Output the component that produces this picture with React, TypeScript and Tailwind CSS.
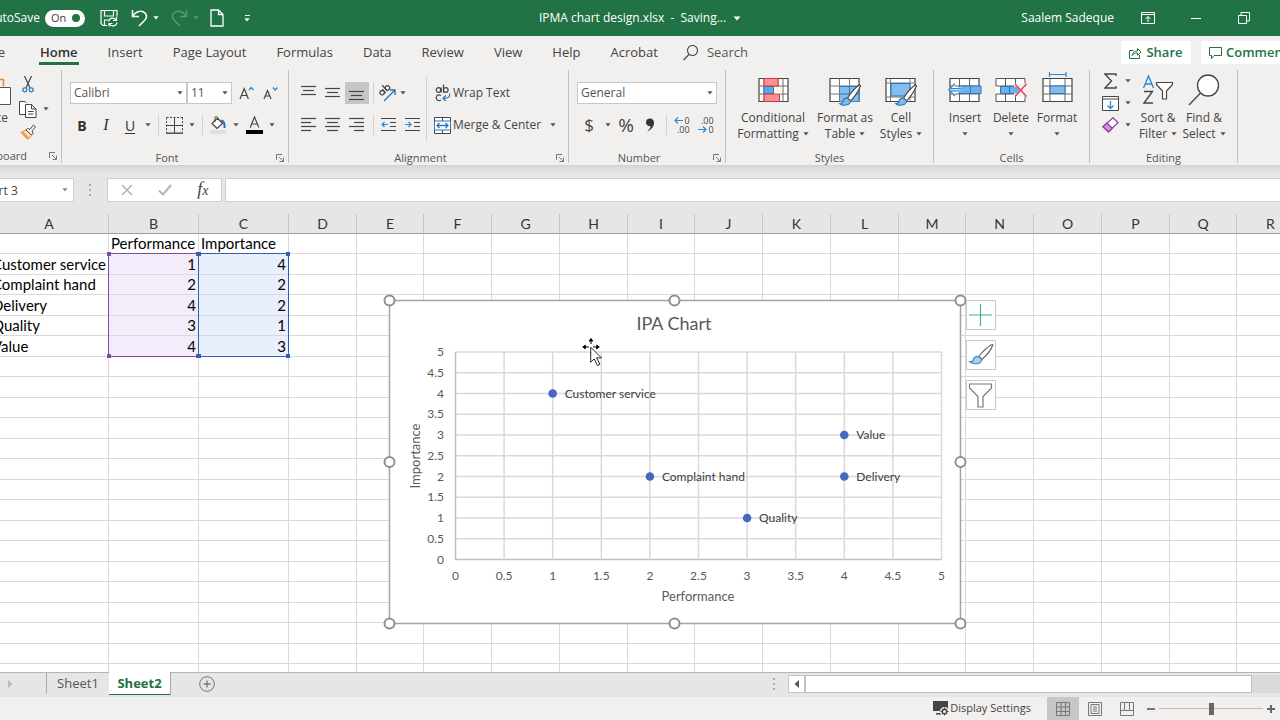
import { useState } from "react";
import type { ReactNode } from "react";

const TABS = ["Insert", "Page Layout", "Formulas", "Data", "Review", "View", "Help", "Acrobat"];

const COLUMNS = "ABCDEFGHIJKLMNOPQRSTUVWXYZ".split("");

const DATA = [
  ["", "Performance", "Importance"],
  ["Customer service", "1", "4"],
  ["Complaint hand", "2", "2"],
  ["Delivery", "4", "2"],
  ["Quality", "3", "1"],
  ["Value", "4", "3"],
];

const POINTS = DATA.slice(1).map(([name, x, y]) => ({ name, x: Number(x), y: Number(y) }));

const TICKS = [0, 0.5, 1, 1.5, 2, 2.5, 3, 3.5, 4, 4.5, 5];

/* ---------- small helpers ---------- */

function Caret({ className = "text-[#555]" }: { className?: string }) {
  return (
    <svg width="6" height="4" viewBox="0 0 6 4" className={`shrink-0 ${className}`} aria-hidden="true">
      <path d="M0.4 0.3h5.2L3 3.4z" fill="currentColor" />
    </svg>
  );
}

function CaretButton({ label }: { label: string }) {
  return (
    <button type="button" aria-label={label} className="flex h-6 w-3 shrink-0 items-center justify-center">
      <Caret />
    </button>
  );
}

function Sep() {
  return (
    <span className="flex h-5 w-2 shrink-0 justify-center">
      <span className="w-px bg-[#d2d0ce]" />
    </span>
  );
}

function Tool({ label, active = false, children }: { label: string; active?: boolean; children: ReactNode }) {
  return (
    <button
      type="button"
      aria-label={label}
      className={`flex h-[22px] w-6 shrink-0 items-center justify-center ${active ? "bg-[#c8c6c4]" : ""}`}
    >
      {children}
    </button>
  );
}

function Group({ label, launcher = false, className, children }: { label: string; launcher?: boolean; className: string; children: ReactNode }) {
  return (
    <section className={`flex shrink-0 flex-col border-r border-[#c3c1bf] ${className}`}>
      <div className="flex h-20 shrink-0">{children}</div>
      <div className="flex h-[15px] items-center text-[11px] leading-[15px] text-[#555]">
        <span className="flex-1 text-center">{label}</span>
        {launcher && <Launcher label={label} />}
      </div>
    </section>
  );
}

function Launcher({ label }: { label: string }) {
  return (
    <button type="button" aria-label={`${label} settings`} className="flex h-4 w-4 items-center justify-center">
      <svg width="8" height="8" viewBox="0 0 8 8" fill="none" stroke="#777">
        <path d="M0.5 6V0.5H6M3 3l4 4M7.5 3.5v4h-4" />
      </svg>
    </button>
  );
}

function BigButton({ icon, line1, line2, className }: { icon: ReactNode; line1: string; line2?: string; className: string }) {
  return (
    <button type="button" className={`flex shrink-0 flex-col items-center text-[12px] leading-4 whitespace-nowrap text-[#444] ${className}`}>
      <span className="flex h-10 items-center justify-center">{icon}</span>
      <span>{line1}</span>
      <span className="flex h-4 items-center gap-1">
        {line2}
        <Caret />
      </span>
    </button>
  );
}

function Lines({ rows }: { rows: [number, number, number][] }) {
  return (
    <svg width="16" height="16" viewBox="0 0 16 16" stroke="#444" strokeWidth="1.2">
      {rows.map(([x1, x2, y]) => (
        <path key={y} d={`M${x1} ${y}H${x2}`} />
      ))}
    </svg>
  );
}

/* ---------- icons ---------- */

function BrushShape({ x, y }: { x: number; y: number }) {
  return (
    <g transform={`translate(${x} ${y})`}>
      <path d="M20.5 0.8C16 4 11 10 8.6 14l3 2.8C15.5 13 19.5 7 21.5 1.8z" fill="#fff" stroke="#444" strokeWidth="1.1" />
      <path d="M8.4 14.2c-2.6-.4-4 1.2-4.3 3-.3 1.7-1.6 2.4-3.3 2.5 3.2 2.3 10.4 2.2 10.7-2.9z" fill="#83b9e8" stroke="#2b77b8" strokeWidth="1.1" />
    </g>
  );
}

function GridBase() {
  return (
    <>
      <path d="M1 3.5h29v23H1z" fill="#fff" stroke="#444" strokeWidth="1.2" />
      <path d="M1 11h29M1 19h29M10.5 3.5v23M20.5 3.5v23" stroke="#777" fill="none" />
    </>
  );
}

const conditionalIcon = (
  <svg width="31" height="30" viewBox="0 0 31 30">
    <path d="M1 3.5h29v23H1z" fill="#fff" stroke="#444" strokeWidth="1.2" />
    <path d="M1 11h29M1 19h29M6 3.5v23M20 3.5v23M25 3.5v23" stroke="#666" fill="none" />
    <path d="M6 3.5h14V11H6zM6 19h15.5v7.5H6z" fill="#fb8f93" stroke="#d6373d" />
    <path d="M6 11.5h9.5v7H6z" fill="#6ba3d6" stroke="#2b77b8" />
    <path d="M16.5 12h7v6.5h-7z" fill="#fff8e0" />
  </svg>
);

const formatTableIcon = (
  <svg width="32" height="30" viewBox="0 0 32 30" className="overflow-visible">
    <GridBase />
    <path d="M11 11.5h19v15H11z" fill="#83bdf0" />
    <path d="M11 19h19M20.5 11v15.5M11 11.5h19v15" stroke="#2b77b8" fill="none" />
    <BrushShape x={10} y={9} />
  </svg>
);

const cellStylesIcon = (
  <svg width="32" height="30" viewBox="0 0 32 30" className="overflow-visible">
    <path d="M1 3.5h29v23H1z" fill="#fff" stroke="#444" strokeWidth="1.2" />
    <path d="M1 8h29M1 22h29M5.5 3.5v23M25 3.5v23" stroke="#777" fill="none" />
    <path d="M6 8.5h19v12.5H6z" fill="#83bdf0" stroke="#2b77b8" />
    <BrushShape x={10} y={9} />
  </svg>
);

const insertIcon = (
  <svg width="36" height="30" viewBox="0 0 36 30">
    <path d="M3 3.5h29v23H3z" fill="#fff" stroke="#444" strokeWidth="1.2" />
    <path d="M3 11h29M3 19h29M12.5 3.5v23M22.5 3.5v23" stroke="#666" fill="none" />
    <path d="M12 11h22v7.5H12z" fill="#6fb1ea" stroke="#2b77b8" />
    <path d="M23.5 11v7.5" stroke="#2b77b8" />
    <path d="M1 14.8 7.5 8v4.500H14v4.500H7.500v4.500z" fill="#fff" stroke="none" />
    <path d="M8 8.5 1.8 14.8 8 21M2 13.7h12M2 15.9h12" stroke="#2b8ad6" strokeWidth="1.3" fill="none" />
  </svg>
);

const deleteIcon = (
  <svg width="34" height="30" viewBox="0 0 34 30">
    <path d="M2 3.5h29v23H2z" fill="#fff" />
    <path d="M2 11V3.5h29V11zM2 19v7.5h29V19zM11.5 3.5V11M21.5 3.5V11M11.5 19v7.5M21.5 19v7.5" stroke="#555" fill="none" />
    <path d="M6.5 11.5h17v7h-17zM15.5 11.5v7" fill="#6fb1ea" stroke="#2b77b8" />
    <path d="M20 8.5h14v13H20z" fill="#f3f2f1" />
    <path d="M20 11.5h3l2.5 3.5-2.5 3.5h-3z" fill="#6fb1ea" />
    <path d="m21 9 11.5 12.5M32.5 9 21 21.5" stroke="#e04a59" strokeWidth="1.5" />
  </svg>
);

const formatIcon = (
  <svg width="31" height="38" viewBox="0 0 31 38">
    <path d="M8 3.500h15.500M7.500 1v5M24 1v5" stroke="#2b8ad6" strokeWidth="1.2" />
    <path d="M1 7.5h29v23H1z" fill="#fff" stroke="#444" strokeWidth="1.2" />
    <path d="M1 15h29M1 23h29M8 7.5v23M23 7.5v23" stroke="#666" fill="none" />
    <path d="M8 15h15v7.5H8z" fill="#83bdf0" stroke="#2b77b8" />
  </svg>
);

const sortIcon = (
  <svg width="32" height="32" viewBox="0 0 32 32" fill="none" strokeWidth="1.4">
    <path d="M1.5 14 6.5 2l5 12M3.3 10h6.4" stroke="#2b8ad6" />
    <path d="M2 17.5h8.5L2 29h9" stroke="#444" />
    <path d="M14.5 8.5h16v2l-6 6.5v8h-4v-8l-6-6.5z" stroke="#444" fill="#fff" strokeWidth="1.2" />
  </svg>
);

const findIcon = (
  <svg width="32" height="32" viewBox="0 0 32 32" fill="none" stroke="#444" strokeWidth="1.3">
    <circle cx="20" cy="11.5" r="10.5" fill="#fff" />
    <path d="M12.5 19 1 31" />
  </svg>
);

/* ---------- title bar ---------- */

function TitleBar() {
  const [autoSave, setAutoSave] = useState(true);

  return (
    <header className="flex h-9 shrink-0 items-center bg-[#217346] text-[12px] text-white">
      <div className="flex min-w-0 flex-1 items-center">
        <div className="flex w-10 justify-end overflow-hidden text-[12px] whitespace-nowrap">
          <label htmlFor="autosave">AutoSave</label>
        </div>
        <label className="relative ml-[5px] flex h-[17px] w-10 items-center rounded-full bg-white text-[11px] text-[#444]">
          <input
            id="autosave"
            type="checkbox"
            checked={autoSave}
            onChange={(e) => setAutoSave(e.target.checked)}
            className="absolute inset-0 appearance-none"
          />
          <span className="pl-[6px]">{autoSave ? "On" : "Off"}</span>
          <span className="mr-[5px] ml-auto size-2 rounded-full bg-[#217346]" />
        </label>
        <button type="button" aria-label="Save" className="ml-3 flex h-7 w-6 items-center justify-center">
          <svg width="18" height="18" viewBox="0 0 18 18" fill="none" stroke="white" strokeWidth="1.2">
            <path d="M7 16.5H3L1 14.5v-13h16v6M4.5 1.5V7h9V1.5M4.5 16v-5H8" />
            <path d="M8.5 12.5c.8-4 5.5-4.5 7.5-1.5M16.5 8v3.5H13M17 13.5c-.8 4-5.5 4.5-7.5 1.5M9 17.5V14.5h3.5" />
          </svg>
        </button>
        <button type="button" aria-label="Undo" className="ml-[6px] flex h-7 w-6 items-center justify-center">
          <svg width="17" height="18" viewBox="0 0 17 18" fill="none" stroke="white" strokeWidth="1.5">
            <path d="M1.5 1v6.5H8M1.5 7.5C4.5 2 11 .8 14 4c2.5 3 1.3 6-1 8l-5 5" />
          </svg>
        </button>
        <button type="button" aria-label="Undo history" className="flex h-7 w-[10px] items-center justify-center">
          <Caret className="text-white" />
        </button>
        <button type="button" aria-label="Redo" className="ml-[6px] flex h-7 w-6 items-center justify-center opacity-25">
          <svg width="17" height="18" viewBox="0 0 17 18" fill="none" stroke="white" strokeWidth="1.5">
            <path d="M15.5 1v6.5H9M15.5 7.5C12.5 2 6 .8 3 4c-2.5 3-1.3 6 1 8l5 5" />
          </svg>
        </button>
        <button type="button" aria-label="Redo history" className="flex h-7 w-[10px] items-center justify-center opacity-25">
          <Caret className="text-white" />
        </button>
        <button type="button" aria-label="New file" className="ml-1 flex h-7 w-6 items-center justify-center">
          <svg width="14" height="18" viewBox="0 0 14 18" fill="none" stroke="white" strokeWidth="1.3">
            <path d="M1 1h7.5L13 5.5V17H1zM8.5 1v4.5H13" />
          </svg>
        </button>
        <button type="button" aria-label="Customize toolbar" className="ml-[10px] flex h-7 w-4 flex-col items-center justify-center gap-[2px]">
          <span className="h-px w-[5px] bg-white" />
          <Caret className="text-white" />
        </button>
      </div>
      <button type="button" className="flex shrink-0 items-center gap-[7px] text-[12px] whitespace-pre">
        IPMA chart design.xlsx{"  -  "}Saving...
        <svg width="8" height="5" viewBox="0 0 8 5" aria-hidden="true">
          <path d="M0.5 0.5h7L4 4.5z" fill="#fff" />
        </svg>
      </button>
      <div className="flex min-w-0 flex-1 items-center justify-end">
        <span className="mr-[10px]">Saalem Sadeque</span>
        <button type="button" aria-label="Ribbon display options" className="flex h-9 w-12 items-center justify-center">
          <svg width="14" height="12" viewBox="0 0 14 12" fill="none" stroke="white">
            <path d="M.5.5h13v11H.5zM.5 2.5h13M7 10V4.5M4.500 7 7 4.500 9.500 7" />
          </svg>
        </button>
        <button type="button" aria-label="Minimize" className="flex h-9 w-12 items-center justify-center">
          <span className="h-px w-[10px] bg-white" />
        </button>
        <button type="button" aria-label="Restore" className="mr-3 flex h-9 w-12 items-center justify-center">
          <svg width="12" height="12" viewBox="0 0 12 12" fill="none" stroke="white">
            <path d="M.5 3.5h8v8h-8zM3 3V.5h8.500v8.500H9" />
          </svg>
        </button>
      </div>
    </header>
  );
}

/* ---------- ribbon ---------- */

function RibbonTabs() {
  return (
    <div className="flex h-8 shrink-0 items-center overflow-hidden pt-px text-[13px] whitespace-nowrap text-[#444]">
      <nav className="flex items-center gap-[30px]">
        <button type="button" className="flex w-[10px] justify-end pr-[5px]">
          File
        </button>
        <button type="button" className="relative font-semibold text-[#333]">
          Home
          <span className="absolute -inset-x-px -bottom-[3px] h-[3px] bg-[#217346]" />
        </button>
        {TABS.map((tab) => (
          <button type="button" key={tab}>
            {tab}
          </button>
        ))}
      </nav>
      <label className="ml-[25px] flex items-center gap-[9px]">
        <svg width="15" height="16" viewBox="0 0 15 16" fill="none" stroke="#444" strokeWidth="1.1">
          <circle cx="9.5" cy="5.5" r="5" />
          <path d="M6 9.5.5 15" />
        </svg>
        <input type="text" aria-label="Search" placeholder="Search" className="w-32 outline-none placeholder:text-[#555]" />
      </label>
      <div className="ml-auto flex shrink-0 gap-[10px] text-[13px] font-semibold text-[#217346]">
        <button type="button" className="flex h-[23px] w-[70px] items-center justify-center gap-1 bg-white">
          <svg width="13" height="12" viewBox="0 0 13 12" fill="none" stroke="#217346">
            <path d="M4.5 3.5h-4v8h10V8M3 8.500c.5-3 2.500-4.500 5.500-4.500V1.500L12 5 8.500 8.300V6C6 6 4.500 6.500 3 8.500z" />
          </svg>
          Share
        </button>
        <button type="button" className="-mr-5 flex h-[23px] w-[99px] items-center gap-1 bg-white pl-2">
          <svg width="13" height="12" viewBox="0 0 13 12" fill="none" stroke="#217346">
            <path d="M.5.5h12v8H5l-2.500 3v-3h-2z" />
          </svg>
          Comments
        </button>
      </div>
    </div>
  );
}

function Ribbon() {
  const [font, setFont] = useState("Calibri");
  const [size, setSize] = useState("11");
  const [format, setFormat] = useState("General");

  return (
    <div className="flex h-[98px] shrink-0 overflow-hidden border-b border-[#d5d3d1] pt-[2px] pb-[2px]">
      {/* Clipboard */}
      <section className="flex w-[62px] shrink-0 flex-col border-r border-[#c3c1bf]">
        <div className="flex h-20">
          <button type="button" className="flex w-3 shrink-0 flex-col items-start overflow-hidden text-[12px] leading-4 text-[#444]">
            <span className="flex h-10 items-center">
              <svg width="12" height="32" viewBox="0 0 12 32" fill="none">
                <path d="M0 5.5h3.5v7" stroke="#e58a2f" strokeWidth="1.5" />
                <path d="M0 13.5h10.5v17H0" fill="#fff" stroke="#555" />
              </svg>
            </span>
            <span className="flex w-2 justify-end">Paste</span>
          </button>
          <div className="flex flex-col pt-[3px] pl-1">
            <Tool label="Cut">
              <svg width="12" height="17" viewBox="0 0 12 17" fill="none" strokeWidth="1.2">
                <path d="M2.5 0 8 12M9.500 0 4 12" stroke="#444" />
                <circle cx="2.8" cy="13.8" r="2" stroke="#2b77b8" />
                <circle cx="9.2" cy="13.8" r="2" stroke="#2b77b8" />
              </svg>
            </Tool>
            <div className="flex items-center pt-[2px]">
              <Tool label="Copy">
                <svg width="18" height="17" viewBox="0 0 18 17" fill="#fff" stroke="#444">
                  <path d="M6.5 13.5h-6V.5H6l1.500 1.500" />
                  <path d="M6.5 3.5h6l4.500 4.500v8.500H6.500zM12.500 3.500V8H17M9 10.500h5.500M9 13h5.500" />
                </svg>
              </Tool>
              <CaretButton label="Copy options" />
            </div>
            <Tool label="Format painter">
              <svg width="17" height="16" viewBox="0 0 17 16">
                <path d="M.8 8.5 6 6l5.500 5.500L8 15.300z" fill="#fde0bd" stroke="#e58a2f" />
                <path d="M5 13.5 2.500 10l-1.200-1.200 2.500-.8 5 5-1 2z" fill="#f0a04b" />
                <path d="m6 6 1.500-1.500 2.500 1 3.500-4.500 2 1.800-3.500 4L13 9.500 11.500 11z" fill="#fff" stroke="#444" />
              </svg>
            </Tool>
          </div>
        </div>
        <div className="flex h-[15px] items-center text-[11px] leading-[15px] text-[#555]">
          <span className="flex flex-1 justify-end overflow-hidden pr-[18px]">Clipboard</span>
          <Launcher label="Clipboard" />
        </div>
      </section>

      <Group label="Font" launcher className="w-[227px]">
        <div className="flex flex-col pt-[7px] pl-2">
          <div className="flex h-8 items-center">
            <div className="relative flex items-center">
              <select
                aria-label="Font name"
                value={font}
                onChange={(e) => setFont(e.target.value)}
                className="h-[22px] w-[117px] appearance-none border border-[#c8c6c4] bg-white pl-[3px] text-[12px] text-[#555]"
              >
                <option>Calibri</option>
                <option>Arial</option>
              </select>
              <span className="pointer-events-none absolute right-1">
                <Caret />
              </span>
            </div>
            <div className="relative flex items-center">
              <select
                aria-label="Font size"
                value={size}
                onChange={(e) => setSize(e.target.value)}
                className="h-[22px] w-[45px] appearance-none border border-[#c8c6c4] bg-white pl-[3px] text-[12px] text-[#555]"
              >
                <option>11</option>
                <option>12</option>
              </select>
              <span className="pointer-events-none absolute right-1">
                <Caret />
              </span>
            </div>
            <span className="ml-[2px] flex">
              <Tool label="Increase font size">
                <svg width="15" height="14" viewBox="0 0 15 14" fill="none">
                  <path d="M1 13 5.2 2.5 9.400 13M2.500 9.500H8" stroke="#444" strokeWidth="1.2" />
                  <path d="m10 4 2.200-2.500L14.500 4" stroke="#2b8ad6" strokeWidth="1.4" />
                </svg>
              </Tool>
              <Tool label="Decrease font size">
                <svg width="15" height="14" viewBox="0 0 15 14" fill="none">
                  <path d="M1 13 4.500 4.500 8 13M2.200 10H7" stroke="#444" strokeWidth="1.2" />
                  <path d="M10 1.500 12.200 4l2.300-2.500" stroke="#2b8ad6" strokeWidth="1.4" />
                </svg>
              </Tool>
            </span>
          </div>
          <div className="flex h-8 items-center text-[14px] text-[#333]">
            <Tool label="Bold">
              <b>B</b>
            </Tool>
            <Tool label="Italic">
              <i className="font-['Liberation_Serif',serif] text-[16px]">I</i>
            </Tool>
            <Tool label="Underline">
              <u className="underline-offset-2">U</u>
            </Tool>
            <CaretButton label="Underline options" />
            <Sep />
            <Tool label="Borders">
              <svg width="17" height="17" viewBox="0 0 17 17" fill="none" stroke="#444">
                <path d="M.5.5h16M.5.5v15M16.500.500v15" strokeDasharray="2 1.5" />
                <path d="M8.5 1v15M1 8.500h15" />
                <path d="M0 16.2h17" strokeWidth="1.4" />
              </svg>
            </Tool>
            <CaretButton label="Border options" />
            <Sep />
            <Tool label="Fill color">
              <svg width="18" height="18" viewBox="0 0 18 18" fill="none">
                <path d="m8.5 2 5 5.500-5.500 5-5-5z" fill="#fff" stroke="#444" strokeWidth="1.2" />
                <path d="M6 6V1.5c0-1.500 2.500-1.500 2.500 0V4" stroke="#444" />
                <path d="M12 4.500c3 .5 4 2.500 3.500 7.500" stroke="#2b6cb0" strokeWidth="2" />
                <path d="M1 14h16v4H1z" fill="#e2e0de" />
              </svg>
            </Tool>
            <CaretButton label="Fill options" />
            <Tool label="Font color">
              <svg width="17" height="18" viewBox="0 0 17 18" fill="none">
                <path d="M4.2 11.5 8.500 1l4.300 10.500M5.700 8h5.600" stroke="#444" strokeWidth="1.2" />
                <path d="M0 14h17v4H0z" fill="#000" />
              </svg>
            </Tool>
            <CaretButton label="Font color options" />
          </div>
        </div>
      </Group>

      <Group label="Alignment" launcher className="w-[280px]">
        <div className="flex w-[137px] flex-col pt-[7px] pl-2">
          <div className="flex h-8 items-center">
            <Tool label="Top align">
              <Lines rows={[[0, 15, 1.5], [2, 13, 5.5], [0, 15, 9.5]]} />
            </Tool>
            <Tool label="Middle align">
              <Lines rows={[[0, 15, 3.5], [2, 13, 7.5], [0, 15, 11.5]]} />
            </Tool>
            <Tool label="Bottom align" active>
              <Lines rows={[[0, 15, 6.5], [2, 13, 10.5], [0, 15, 14.5]]} />
            </Tool>
            <Sep />
            <button type="button" aria-label="Orientation" className="flex h-[22px] w-5 items-center justify-center">
              <svg width="18" height="18" viewBox="0 0 18 18" fill="none" strokeWidth="1.2">
                <g transform="rotate(-42 6 7)" stroke="#444">
                  <circle cx="3.5" cy="7" r="2.2" />
                  <path d="M6 4.500v5M8.500 1.500v8" />
                  <circle cx="10.7" cy="7" r="2.2" />
                </g>
                <path d="M6 17 16.500 6.500M12 6h5v5" stroke="#2b77b8" strokeWidth="1.4" />
              </svg>
            </button>
            <CaretButton label="Orientation options" />
          </div>
          <div className="flex h-8 items-center">
            <Tool label="Align left">
              <Lines rows={[[0, 15, 1.5], [0, 10, 5.5], [0, 15, 9.5], [0, 10, 13.5]]} />
            </Tool>
            <Tool label="Center">
              <Lines rows={[[0, 15, 1.5], [2, 13, 5.5], [0, 15, 9.5], [2, 13, 13.5]]} />
            </Tool>
            <Tool label="Align right">
              <Lines rows={[[0, 15, 1.5], [5, 15, 5.5], [0, 15, 9.5], [5, 15, 13.5]]} />
            </Tool>
            <Sep />
            <Tool label="Decrease indent">
              <svg width="16" height="16" viewBox="0 0 16 16" fill="none" stroke="#444" strokeWidth="1.2">
                <path d="M0 1.500h15M9 5.500h6M9 9.500h6M0 13.500h15" />
                <path d="M7 7.500H1M3.500 5 1 7.500 3.500 10" stroke="#2b8ad6" />
              </svg>
            </Tool>
            <Tool label="Increase indent">
              <svg width="16" height="16" viewBox="0 0 16 16" fill="none" stroke="#444" strokeWidth="1.2">
                <path d="M0 1.500h15M9 5.500h6M9 9.500h6M0 13.500h15" />
                <path d="M0 7.500h6M3.500 5 6 7.500 3.500 10" stroke="#2b8ad6" />
              </svg>
            </Tool>
          </div>
        </div>
        <div className="mt-[7px] flex h-16 flex-col border-l border-[#d2d0ce] pl-[7px] text-[12px] text-[#444]">
          <button type="button" className="flex h-8 items-center gap-[2px]">
            <svg width="17" height="18" viewBox="0 0 17 18" fill="none" stroke="#444" strokeWidth="1.2">
              <circle cx="4.5" cy="6" r="2.3" />
              <path d="M7.2 3.500v5M9.500.500v8" />
              <circle cx="11.8" cy="6" r="2.3" />
              <path d="M7 11.500c-3-1.500-4.800.3-4.800 2.300s2 3.700 4.800 2.200" />
              <path d="M15.5 9.500c.8 3-1 5-6 4.800M11.800 11.500 9 14.300l2.800 2.700" stroke="#2b77b8" />
            </svg>
            Wrap Text
          </button>
          <div className="flex h-8 items-center">
            <button type="button" className="flex items-center gap-[2px]">
              <svg width="17" height="17" viewBox="0 0 17 17" fill="#fff" stroke="#444">
                <path d="M.5.5h16v16H.5zM8.500.500v16" />
                <path d="M.5 4h16v9H.5z" stroke="#2b77b8" />
                <path d="M3 8.500h11M5.500 6 3 8.500 5.500 11M11.500 6 14 8.500 11.500 11" stroke="#2b77b8" fill="none" strokeWidth="1.3" />
              </svg>
              Merge &amp; Center
            </button>
            <span className="ml-[6px] flex">
              <CaretButton label="Merge options" />
            </span>
          </div>
        </div>
      </Group>

      <Group label="Number" launcher className="w-[157px]">
        <div className="flex flex-col pt-[7px] pl-2">
          <div className="flex h-8 items-center">
            <div className="relative flex items-center">
              <select
                aria-label="Number format"
                value={format}
                onChange={(e) => setFormat(e.target.value)}
                className="h-[22px] w-[140px] appearance-none border border-[#c8c6c4] bg-white pl-[3px] text-[12px] text-[#555]"
              >
                <option>General</option>
                <option>Percentage</option>
              </select>
              <span className="pointer-events-none absolute right-1">
                <Caret />
              </span>
            </div>
          </div>
          <div className="flex h-8 items-center text-[17px] text-[#444]">
            <Tool label="Accounting format">$</Tool>
            <span className="ml-px flex">
              <CaretButton label="Currency options" />
            </span>
            <Tool label="Percent style">
              <span className="text-[19px]">%</span>
            </Tool>
            <Tool label="Comma style">
              <svg width="10" height="14" viewBox="0 0 10 14">
                <path d="M5 .5c2.500 0 4 1.700 4 4.300 0 4-2.800 7.200-7 8.700 2.200-1.800 3.500-3.600 3.700-5.200C3 8.500 1 7 1 4.600 1 2 2.600.500 5 .500z" fill="#333" />
              </svg>
            </Tool>
            <Sep />
            <Tool label="Increase decimal">
              <span className="flex flex-col items-end text-[9px] leading-[9px]">
                <span className="flex items-center gap-px">
                  <svg width="9" height="7" viewBox="0 0 9 7" fill="none" stroke="#2b8ad6" strokeWidth="1.2">
                    <path d="M9 3.500H1M4 .500 1 3.500l3 3" />
                  </svg>
                  0
                </span>
                <span>.00</span>
              </span>
            </Tool>
            <Tool label="Decrease decimal">
              <span className="flex flex-col items-end text-[9px] leading-[9px]">
                <span>.00</span>
                <span className="flex items-center gap-px">
                  <svg width="9" height="7" viewBox="0 0 9 7" fill="none" stroke="#2b8ad6" strokeWidth="1.2">
                    <path d="M0 3.500h8M5 .500l3 3-3 3" />
                  </svg>
                  0
                </span>
              </span>
            </Tool>
          </div>
        </div>
      </Group>

      <Group label="Styles" className="w-[208px]">
        <div className="flex pl-[9px]">
          <BigButton className="w-[76px]" icon={conditionalIcon} line1="Conditional" line2="Formatting" />
          <BigButton className="w-[68px]" icon={formatTableIcon} line1="Format as" line2="Table" />
          <BigButton className="w-11" icon={cellStylesIcon} line1="Cell" line2="Styles" />
        </div>
      </Group>

      <Group label="Cells" className="w-[156px]">
        <div className="flex pl-2">
          <BigButton className="w-[46px]" icon={insertIcon} line1="Insert" />
          <BigButton className="w-[46px]" icon={deleteIcon} line1="Delete" />
          <BigButton className="w-[46px]" icon={formatIcon} line1="Format" />
        </div>
      </Group>

      <Group label="Editing" className="w-[148px]">
        <div className="flex pl-2">
          <div className="flex w-[38px] flex-col">
            <div className="flex h-[22px] items-center">
              <Tool label="AutoSum">
                <svg width="13" height="16" viewBox="0 0 13 16" fill="none" stroke="#444" strokeWidth="1.3">
                  <path d="M12 3V1H1l6.500 7L1 15h11v-2" />
                </svg>
              </Tool>
              <CaretButton label="AutoSum options" />
            </div>
            <div className="flex h-[22px] items-center">
              <Tool label="Fill">
                <svg width="17" height="15" viewBox="0 0 17 15" fill="#fff" stroke="#444">
                  <path d="M.5.5h16v14H.5zM.5 3h16" />
                  <path d="M8.5 5v7.500M5.500 9.500l3 3 3-3" fill="none" stroke="#2b8ad6" strokeWidth="1.3" />
                </svg>
              </Tool>
              <CaretButton label="Fill options" />
            </div>
            <div className="flex h-[22px] items-center">
              <Tool label="Clear">
                <svg width="17" height="16" viewBox="0 0 17 16" strokeWidth="1.2" stroke="#8e3ba8">
                  <path d="M11 .8 16 5.500 6.500 15 1 9.800z" fill="#fff" />
                  <path d="M4.8 6 10.300 11.200 6.500 15 1 9.800z" fill="#d58ee6" />
                </svg>
              </Tool>
              <CaretButton label="Clear options" />
            </div>
          </div>
          <BigButton className="w-11" icon={sortIcon} line1="Sort &amp;" line2="Filter" />
          <BigButton className="w-12" icon={findIcon} line1="Find &amp;" line2="Select" />
        </div>
      </Group>
    </div>
  );
}

/* ---------- formula bar ---------- */

function FormulaBar() {
  return (
    <div className="flex h-12 shrink-0 items-center overflow-hidden bg-gradient-to-b from-[#d8d7d6] to-[#e6e6e6] to-15%">
      <div className="relative -ml-[24px] flex items-center">
        <input
          aria-label="Name box"
          defaultValue="Chart 3"
          className="h-6 w-[98px] border border-[#cfcfcf] bg-white text-[12px] text-[#444] outline-none"
        />
        <span className="pointer-events-none absolute right-[6px]">
          <Caret className="text-[#888]" />
        </span>
      </div>
      <div className="ml-[15px] flex flex-col gap-[3px]">
        <span className="size-[2px] bg-[#aaa]" />
        <span className="size-[2px] bg-[#aaa]" />
        <span className="size-[2px] bg-[#aaa]" />
      </div>
      <div className="ml-4 flex h-6 w-[115px] shrink-0 items-center justify-around border border-[#cfcfcf] bg-white">
        <button type="button" aria-label="Cancel">
          <svg width="12" height="12" viewBox="0 0 12 12" stroke="#b5b5b5" strokeWidth="1.6">
            <path d="m1 1 10 10M11 1 1 11" />
          </svg>
        </button>
        <button type="button" aria-label="Enter">
          <svg width="14" height="12" viewBox="0 0 14 12" fill="none" stroke="#b5b5b5" strokeWidth="2">
            <path d="m1 6.500 4 4L13 1" />
          </svg>
        </button>
        <button type="button" aria-label="Insert function" className="font-['Liberation_Serif',serif] text-[18px] leading-5 text-[#444] italic">
          f<span className="text-[14px]">x</span>
        </button>
      </div>
      <input aria-label="Formula" className="ml-[3px] h-6 min-w-0 flex-1 border border-r-0 border-[#cfcfcf] bg-white px-2 text-[13px] outline-none" />
    </div>
  );
}

/* ---------- chart ---------- */

const plotX = (v: number) => 66.5 + v * 97.2;
const plotY = (v: number) => 259.5 - v * 41.5;

function Chart() {
  return (
    <svg width="572" height="324" viewBox="0 0 572 324" className="block overflow-visible font-[Lato,sans-serif]" fill="#595959" role="img" aria-label="IPA Chart">
      <rect x="0.5" y="0.5" width="571" height="323" fill="#fff" stroke="#a3a3a3" strokeWidth="1.5" />
      <text x="285" y="30" fontSize="18" textAnchor="middle">
        IPA Chart
      </text>
      {TICKS.map((t) => (
        <g key={t} fontSize="12">
          <path d={`M${plotX(t)} ${plotY(5)}V${plotY(0)}M${plotX(0)} ${plotY(t)}H${plotX(5)}`} stroke={t === 0 ? "#bfbfbf" : "#d9d9d9"} strokeWidth="1.5" />
          <text x={plotX(t)} y="280" textAnchor="middle">
            {t}
          </text>
          <text x="55" y={plotY(t) + 4} textAnchor="end">
            {t}
          </text>
        </g>
      ))}
      {POINTS.map((p) => (
        <g key={p.name}>
          <circle cx={plotX(p.x)} cy={plotY(p.y)} r="4.3" fill="#4468bd" />
          <text x={plotX(p.x) + 12} y={plotY(p.y) + 4} fontSize="12" fill="#404040">
            {p.name}
          </text>
        </g>
      ))}
      <text x="309" y="301" fontSize="13" textAnchor="middle">
        Performance
      </text>
      <text x="31" y="156" fontSize="13" textAnchor="middle" transform="rotate(-90 31 156)">
        Importance
      </text>
      {[0, 285, 571].map((x) =>
        [0.5, 162, 323.5].map((y) =>
          x === 285 && y === 162 ? null : <circle key={`${x}-${y}`} cx={x + 0.5} cy={y} r="5" fill="#fff" stroke="#8f8f8f" strokeWidth="2" />
        )
      )}
    </svg>
  );
}

function MovePointer() {
  return (
    <svg width="20" height="28" viewBox="0 0 20 28" aria-hidden="true">
      <path d="M9 .5 7.2 3h3.600zM9 2v4M.8 9l2.500-1.800v3.600zM3 9h4M17.200 9l-2.500-1.800v3.600zM15 9h-4M9 14v3" fill="#000" stroke="#000" />
      <path d="M9 9.500V25l3.500-3.500L16 28.500l2.500-1.500-3.500-6.500h5z" transform="scale(.97)" fill="#fff" stroke="#222" />
    </svg>
  );
}

function ChartButtons() {
  return (
    <div className="flex flex-col gap-[10px]">
      <button type="button" aria-label="Chart elements" className="flex size-[30px] items-center justify-center border border-[#c8c8c8] bg-white">
        <svg width="24" height="24" viewBox="0 0 24 24" stroke="#49b184" strokeWidth="1.2">
          <path d="M11.5 1v22M0 12h23" />
        </svg>
      </button>
      <button type="button" aria-label="Chart styles" className="flex size-[30px] items-center justify-center border border-[#c8c8c8] bg-white">
        <svg width="26" height="24" viewBox="0 0 26 24">
          <path d="M24 1.500C19 4 14 9.500 10.800 13.500l3 3C18.500 12.500 23 7 24.800 2z" fill="#fff" stroke="#666" strokeWidth="1.2" />
          <path d="M10.5 13.500c-3-.3-4.500 1.200-5 3-.5 1.600-2 2.300-4 2.300 3.500 3 12 2.600 12.300-2.300z" fill="#a9d0f0" stroke="#4a8cc6" strokeWidth="1.2" />
        </svg>
      </button>
      <button type="button" aria-label="Chart filters" className="flex size-[30px] items-center justify-center border border-[#c8c8c8] bg-white">
        <svg width="24" height="25" viewBox="0 0 24 25" fill="#fff" stroke="#777" strokeWidth="1.2">
          <path d="M.5 1h22v4L14 13.500V24H9V13.500L.5 5z" />
        </svg>
      </button>
    </div>
  );
}

/* ---------- sheet ---------- */

function RangeOutline({ className, handle }: { className: string; handle: string }) {
  return (
    <div className={`pointer-events-none absolute border ${className}`}>
      <span className={`absolute -top-[2px] -left-[2px] size-1 ${handle}`} />
      <span className={`absolute -top-[2px] -right-[2px] size-1 ${handle}`} />
      <span className={`absolute -bottom-[2px] -left-[2px] size-1 ${handle}`} />
      <span className={`absolute -right-[2px] -bottom-[2px] size-1 ${handle}`} />
    </div>
  );
}

function columnWidth(index: number) {
  if (index === 0) return "w-[119px]";
  if (index < 3) return "w-[90px]";
  return index % 4 === 0 ? "w-[67px]" : "w-[68px]";
}

function cellTint(row: number, col: number) {
  if (row < 1 || row > 5) return "";
  if (col === 1) return "bg-[#f2ecfb]";
  if (col === 2) return "bg-[#e9effc]";
  return "";
}

function Sheet() {
  return (
    <main className="relative min-h-0 flex-1 overflow-hidden bg-white">
      <table className="-ml-[10px] w-[1857px] table-fixed border-separate border-spacing-0 font-[Lato,sans-serif] text-[15px] leading-[19px] text-black">
        <thead>
          <tr className="h-5">
            {COLUMNS.map((letter, i) => (
              <th
                key={letter}
                scope="col"
                className={`border-r border-b border-r-[#c6c6c6] border-b-[#9e9e9e] bg-[#e6e6e6] p-0 text-[14px] font-normal text-[#333] ${columnWidth(i)}`}
              >
                {letter}
              </th>
            ))}
          </tr>
        </thead>
        <tbody>
          {Array.from({ length: 60 }, (_, row) => (
            <tr key={row} className="odd:h-5 even:h-[21px]">
              {COLUMNS.map((letter, col) => {
                const text = DATA[row]?.[col] ?? "";
                const numeric = row > 0 && col > 0;
                return (
                  <td
                    key={letter}
                    className={`border-r border-b border-[#d9d9d9] px-[2px] py-0 whitespace-nowrap ${numeric ? "text-right" : ""} ${cellTint(row, col)}`}
                  >
                    {text}
                  </td>
                );
              })}
            </tr>
          ))}
        </tbody>
      </table>

      <RangeOutline className="top-[39px] left-[108px] h-[104px] w-[91px] border-[#7b4fa0]" handle="bg-[#7b4fa0]" />
      <RangeOutline className="top-[39px] left-[198px] h-[104px] w-[91px] border-[#2f5fb3]" handle="bg-[#2f5fb3]" />

      <div className="absolute top-[86px] left-[389px]">
        <Chart />
      </div>
      <div className="absolute top-[86px] left-[966px]">
        <ChartButtons />
      </div>
      <div className="pointer-events-none absolute top-[124px] left-[582px]">
        <MovePointer />
      </div>
    </main>
  );
}

/* ---------- bottom bars ---------- */

function SheetTabs() {
  return (
    <div className="flex h-[25px] shrink-0 items-start border-t border-[#b5b5b5] bg-[#e6e6e6] text-[13px] text-[#555]">
      <button type="button" aria-label="Next sheet" className="flex h-[22px] w-[46px] items-center pl-2">
        <svg width="5" height="8" viewBox="0 0 5 8">
          <path d="M0 0v8l4.500-4z" fill="#bbb" />
        </svg>
      </button>
      <button type="button" className="flex h-[21px] w-[63px] items-center justify-center border-l border-[#ababab]">
        Sheet1
      </button>
      <button type="button" className="-mt-px flex h-[23px] w-[62px] items-center justify-center border-r border-b border-r-[#ababab] border-b-[#217346] bg-white pt-px font-bold text-[#217346]">
        Sheet2
      </button>
      <button type="button" aria-label="New sheet" className="ml-7 flex h-[22px] items-center">
        <svg width="16" height="16" viewBox="0 0 16 16" fill="none" stroke="#777">
          <circle cx="8" cy="8" r="7.3" />
          <path d="M8 4.500v7M4.500 8h7" strokeWidth="1.3" />
        </svg>
      </button>
      <div className="ml-auto flex h-[22px] items-center">
        <div className="mr-[13px] flex flex-col gap-[3px]">
          <span className="size-[2px] bg-[#aaa]" />
          <span className="size-[2px] bg-[#aaa]" />
          <span className="size-[2px] bg-[#aaa]" />
        </div>
        <div className="flex h-[18px] w-[492px] bg-[#dadada]">
          <button type="button" aria-label="Scroll left" className="flex w-[17px] items-center justify-center border border-[#c6c6c6] bg-white">
            <svg width="5" height="8" viewBox="0 0 5 8">
              <path d="M5 0v8L.5 4z" fill="#555" />
            </svg>
          </button>
          <div className="w-[447px] border border-[#bdbdbd] bg-white" />
        </div>
      </div>
    </div>
  );
}

function StatusBar() {
  const [zoom, setZoom] = useState(100);

  return (
    <footer className="flex h-[23px] shrink-0 items-center justify-end bg-[#f1f0ef] text-[11px] text-[#444]">
      <button type="button" className="mr-4 flex items-center gap-px">
        <svg width="16" height="15" viewBox="0 0 16 15">
          <path d="M0 0h15v10H0zM3 12h6v1.500H3z" fill="#444" />
          <circle cx="11.5" cy="10.5" r="4.5" fill="#f1f0ef" />
          <circle cx="11.5" cy="10.5" r="2.3" fill="none" stroke="#444" strokeWidth="1.3" />
          <path d="M11.5 6.500v8M7.500 10.500h8M8.700 7.700l5.600 5.600M14.300 7.700l-5.600 5.600" stroke="#444" />
          <circle cx="11.5" cy="10.5" r="1.5" fill="#f1f0ef" />
        </svg>
        Display Settings
      </button>
      <button type="button" aria-label="Normal view" className="flex h-[23px] w-8 items-center justify-center bg-[#c8c6c4]">
        <svg width="14" height="14" viewBox="0 0 14 14" fill="none" stroke="#777">
          <path d="M.5.5h13v13H.5zM5 .500v13M9.500.500v13M.5 5h13M.5 9.500h13" />
        </svg>
      </button>
      <button type="button" aria-label="Page layout view" className="flex h-[23px] w-8 items-center justify-center">
        <svg width="14" height="14" viewBox="0 0 14 14" fill="none" stroke="#777">
          <path d="M.5.5h13v13H.5zM3 2.500h8v9H3zM5 5h4M5 7h4M5 9h4" />
        </svg>
      </button>
      <button type="button" aria-label="Page break view" className="flex h-[23px] w-8 items-center justify-center">
        <svg width="14" height="14" viewBox="0 0 14 14" fill="none" stroke="#777">
          <path d="M.5.5h13v13H.5zM4.500.500v8h5v-8M.5 8.500h4M9.500 8.500h4" />
        </svg>
      </button>
      <button type="button" aria-label="Zoom out" className="ml-[3px] flex h-[23px] w-[10px] items-center justify-center">
        <span className="h-[2px] w-2 bg-[#777]" />
      </button>
      <input
        type="range"
        aria-label="Zoom"
        min={0}
        max={200}
        value={zoom}
        onChange={(e) => setZoom(Number(e.target.value))}
        className="mx-[3px] h-3 w-[104px] appearance-none bg-[linear-gradient(#c9b8b5,#c9b8b5)] bg-[length:100%_1px] bg-center bg-no-repeat [&::-webkit-slider-thumb]:h-3 [&::-webkit-slider-thumb]:w-[5px] [&::-webkit-slider-thumb]:appearance-none [&::-webkit-slider-thumb]:bg-[#6d6463]"
      />
      <button type="button" aria-label="Zoom in" className="mr-1 flex h-[23px] w-[10px] items-center justify-center">
        <svg width="8" height="8" viewBox="0 0 8 8" stroke="#666" strokeWidth="2">
          <path d="M4 0v8M0 4h8" />
        </svg>
      </button>
    </footer>
  );
}

export default function App() {
  return (
    <div className="flex h-screen flex-col overflow-hidden bg-[#f1f0ef] font-['Open_Sans',sans-serif]">
      <TitleBar />
      <RibbonTabs />
      <Ribbon />
      <FormulaBar />
      <Sheet />
      <SheetTabs />
      <StatusBar />
    </div>
  );
}
